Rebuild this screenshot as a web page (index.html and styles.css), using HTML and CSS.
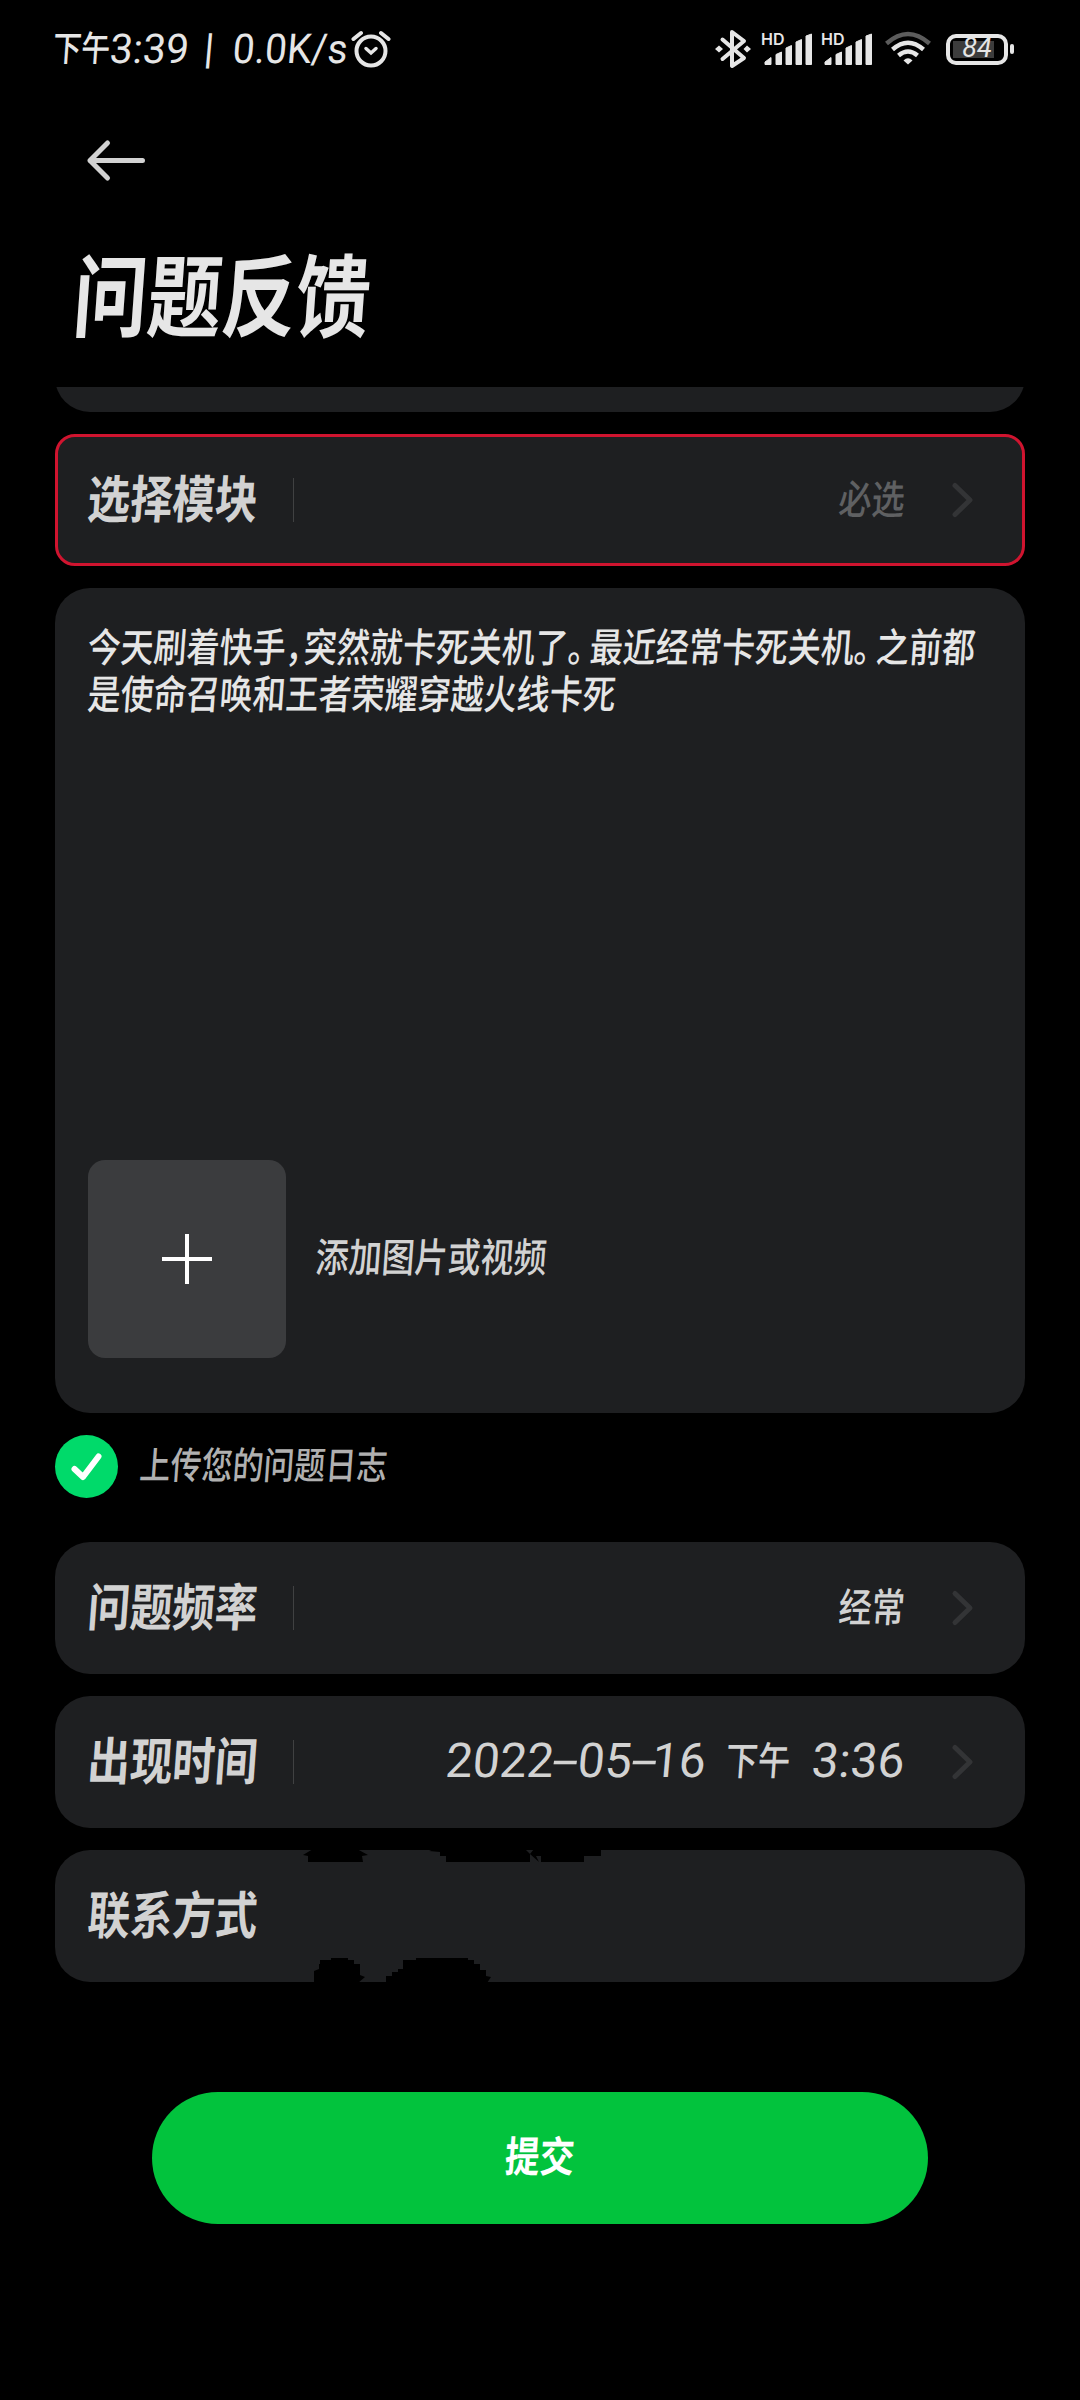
FILE: index.html
```html
<!DOCTYPE html>
<html lang="zh-CN">
<head>
<meta charset="utf-8">
<title>问题反馈</title>
<link rel="stylesheet" href="styles.css">
</head>
<body>
<div class="statusbar">
  <div class="status-left">
    <span class="cell cell-ampm"><span class="t">下午</span></span>
    <span class="cell cell-clock"><span class="n">3:39</span></span>
    <span class="cell cell-bar"><span class="n">|</span></span>
    <span class="cell cell-speed"><span class="n">0.0K/s</span></span>
    <svg class="alarm" width="40" height="38" viewBox="0 0 40 38" fill="none" stroke="#e6e6e6" stroke-linecap="round">
      <circle cx="20" cy="21" r="14.5" stroke-width="4"/>
      <path d="M2.5 9 10 3M37.500 9 30 3" stroke-width="4"/>
      <path d="M15 18.500 20 23 25 18.500" stroke-width="3.500"/>
    </svg>
  </div>
  <div class="status-right">
    <svg width="36" height="40" viewBox="0 0 36 40" fill="none" stroke="#e6e6e6" stroke-width="4" stroke-linecap="round" stroke-linejoin="round">
      <path d="M7.500 10.500 29 29 17 37V3L29 12 7.500 30"/>
      <path d="M0 20 4 16.500 8 20 4 23.500ZM28.500 20 32 16.500 36 20 32 23.500Z" fill="#e6e6e6" stroke="none"/>
    </svg>
    <div class="signal">
      <span class="hd">HD</span>
      <svg width="50" height="34" viewBox="0 0 50 34" fill="#e6e6e6"><path d="M2 30 8 25.500V32.500H2ZM13 22.500 18.500 20V32.500H13ZM23 16 28.500 13.500V32.500H23ZM33 10 38.500 7.500V32.500H33ZM43 4 48.500 2V32.500H43Z" stroke="#e6e6e6" stroke-linejoin="round"/></svg>
    </div>
    <div class="signal">
      <span class="hd">HD</span>
      <svg width="50" height="34" viewBox="0 0 50 34" fill="#e6e6e6"><path d="M2 30 8 25.500V32.500H2ZM13 22.500 18.500 20V32.500H13ZM23 16 28.500 13.500V32.500H23ZM33 10 38.500 7.500V32.500H33ZM43 4 48.500 2V32.500H43Z" stroke="#e6e6e6" stroke-linejoin="round"/></svg>
    </div>
    <svg class="wifi" width="46" height="36" viewBox="0 0 46 36" fill="none" stroke="#e6e6e6" stroke-width="4.500">
      <path d="M1.500 12.500Q23-6.500 44.500 12.500" stroke="#5c5c5c"/>
      <path d="M7.500 18.500Q23 5 38.500 18.500"/>
      <path d="M13.500 24.500Q23 16.500 32.500 24.500"/>
      <path d="M18.500 29.500Q23 25 27.500 29.500L23 33.500Z" fill="#e6e6e6" stroke="none"/>
    </svg>
    <div class="battery"><span class="level">84</span></div>
  </div>
</div>

<header class="header">
  <svg class="back" width="60" height="44" viewBox="0 0 60 44" fill="none" stroke="#d2d2d2" stroke-width="5" stroke-linecap="round" stroke-linejoin="round"><path d="M21.500 5 4 22.500 21.500 40M4 22.500H56.500"/></svg>
  <h1 class="title"><span class="t">问题反馈</span></h1>
</header>

<main class="form">
  <div class="clip"><div class="card card-clipped"></div></div>
  <div class="card row row-error">
    <span class="label"><span class="t">选择模块</span></span><i class="divider"></i>
    <span class="value muted"><span class="t">必选</span></span>
    <svg class="chevron" width="26" height="40" viewBox="0 0 26 40"><path d="M4 5.500 19 20 4 34.500"/></svg>
  </div>
  <section class="card report">
    <div class="report-text">
      <p class="t">今天刷着快手<span class="comma">，</span>突然就卡死关机了<span class="stop">。</span>最近经常卡死关机<span class="stop">。</span>之前都</p>
      <p class="t">是使命召唤和王者荣耀穿越火线卡死</p>
    </div>
    <div class="upload">
      <div class="tile"><svg width="50" height="50" viewBox="0 0 50 50" stroke="#fff" stroke-width="4"><path d="M25 0V50M0 25H50"/></svg></div>
      <span class="upload-text"><span class="t">添加图片或视频</span></span>
    </div>
  </section>
  <div class="log">
    <div class="check"><svg width="63" height="63" viewBox="0 0 63 63" fill="none" stroke="#fff" stroke-width="6" stroke-linecap="round" stroke-linejoin="round"><path d="M19.500 34 28 42 43.500 21.500"/></svg></div>
    <span class="t">上传您的问题日志</span>
  </div>
  <div class="card row">
    <span class="label"><span class="t">问题频率</span></span><i class="divider"></i>
    <span class="value"><span class="t">经常</span></span>
    <svg class="chevron" width="26" height="40" viewBox="0 0 26 40"><path d="M4 5.500 19 20 4 34.500"/></svg>
  </div>
  <div class="card row">
    <span class="label"><span class="t">出现时间</span></span><i class="divider"></i>
    <span class="value date"><span class="n">2022</span><span class="n dash">-</span><span class="n">05</span><span class="n dash">-</span><span class="n sixteen">16</span><span class="ampm"><span class="t">下午</span></span><span class="n">3:36</span></span>
    <svg class="chevron" width="26" height="40" viewBox="0 0 26 40"><path d="M4 5.500 19 20 4 34.500"/></svg>
  </div>
  <div class="card row contact">
    <span class="label"><span class="t">联系方式</span></span>
    <svg class="smudge" width="970" height="132" viewBox="0 0 970 132"><path d="M248 5 258-1H302L313 5 307 6 308 12H253V6ZM374 1 379-1H470L475 4V12H391V6H385V2ZM479-1H546V6H529V12H486V6H481L484 12 475 4ZM259 133V121L264 119V114H265V110H276V108H293V110H299V114H305V125L310 127 303 133ZM331 133V126H337V122H343V119H348V110H361V108H413V110H419V114H425V120H431V126L436 127 432 133Z"/></svg>
  </div>
</main>
<button class="submit"><span class="t">提交</span></button>
</body>
</html>
```
FILE: styles.css
```css
* { box-sizing: border-box; }
body {
  margin: 0;
  width: 1080px;
  height: 2400px;
  background: #000;
  color: #e6e6e6;
  font-family: "Noto Sans CJK SC", sans-serif;
  font-weight: 500;
  overflow: hidden;
}
svg { display: block; flex: none; }

/* condensed, slightly slanted lettering */
.t {
  display: inline-block;
  white-space: nowrap;
  transform: scaleX(.825) skewX(-5deg);
  transform-origin: left center;
}
.n {
  display: inline-block;
  white-space: nowrap;
  font-family: Roboto, sans-serif;
  font-weight: 400;
  transform: skewX(-5deg);
}

.statusbar {
  height: 98px;
  padding: 0 66px 0 53px;
  display: flex;
  justify-content: space-between;
  align-items: center;
}
.status-left, .status-right { display: flex; align-items: center; }
.cell { flex: none; line-height: 48px; font-size: 41px; margin-top: -4px; }
.cell .n { transform-origin: left center; }
.cell-ampm { width: 57px; font-size: 35px; margin-top: -6px; }
.cell-ampm .t { transform: scaleX(.82) skewX(-5deg); }
.cell-clock { width: 94px; }
.cell-bar { width: 29px; font-size: 42px; }
.cell-speed { width: 118px; }
.cell-speed .n { transform: scaleX(.95) skewX(-5deg); }
.status-right { gap: 10px; }
.signal { position: relative; width: 50px; height: 34px; }
.signal:nth-child(2) { margin-left: 2px; }
.hd {
  position: absolute;
  left: -2px;
  top: -1px;
  font: 600 16px/16px Inter, sans-serif;
}
.wifi { margin-left: 2px; }
.battery {
  position: relative;
  width: 62px;
  height: 31px;
  margin: 0 6px 0 5px;
  border: 4px solid #e6e6e6;
  border-radius: 10px;
  background: linear-gradient(#3c3c3c, #3c3c3c) 3px 3px / 41px 17px no-repeat;
  display: flex;
  justify-content: center;
  align-items: center;
}
.battery::after {
  content: "";
  position: absolute;
  right: -10px;
  top: 6px;
  width: 4px;
  height: 10px;
  border-radius: 2px;
  background: #e6e6e6;
}
.level { font: italic 400 27px/24px Roboto, sans-serif; margin-top: -2px; }

.header { height: 289px; padding: 40px 0 0 74px; }
.back { margin-left: 12px; }
.title {
  margin: 44px 0 0;
  font-size: 90px;
  line-height: 130px;
  font-weight: 700;
}

.form { padding: 0 55px; }
.card { position: relative; background: #1e1f21; border-radius: 35px; margin-bottom: 22px; }
.clip { height: 25px; margin-bottom: 22px; overflow: hidden; display: flex; align-items: flex-end; }
.card-clipped { width: 100%; height: 132px; margin: 0; flex: none; }
.row { height: 132px; padding: 0 48px 0 33px; display: flex; align-items: center; }
.row-error { border: 3px solid #d0142f; border-radius: 20px; padding: 0 45px 0 30px; }
.label { width: 205px; font-size: 51px; line-height: 76px; color: #d2d2d2; font-weight: 700; margin-top: -8px; }
.label .t { transform: scaleX(.833) skewX(-5deg); }
.divider { width: 1px; height: 44px; background: #404142; }
.value { margin: -6px 0 0 auto; font-size: 40px; line-height: 60px; color: #d2d2d2; }
.value .t { transform-origin: right center; }
.muted { color: #5f6062; }
.chevron { margin-left: 46px; fill: none; stroke: #333436; stroke-width: 5; stroke-linecap: round; stroke-linejoin: round; }
.date { display: flex; font-size: 48px; margin-top: -2px; }
.date .dash { width: 25px; text-align: center; transform: scaleX(2) skewX(-5deg); }
.date .sixteen { width: 61px; text-align: right; margin-left: -12px; }
.date .ampm { width: 86px; font-size: 39px; margin: -3px 0 0 20px; }
.date .ampm .t { transform-origin: left center; }

.report { height: 825px; padding: 33px; display: flex; flex-direction: column; justify-content: space-between; }
.report-text { font-size: 40px; line-height: 47px; padding-top: 1px; }
.report-text p { display: block; margin: 0; }
.comma { margin-right: -.45em; }
.stop { margin-right: -.33em; }
.upload { display: flex; align-items: center; padding-bottom: 22px; }
.tile { width: 198px; height: 198px; border-radius: 17px; background: #3b3c3e; display: flex; align-items: center; justify-content: center; }
.upload-text { margin: -8px 0 0 30px; font-size: 40px; color: #d2d2d2; }

.log { height: 63px; margin-bottom: 44px; display: flex; align-items: center; gap: 22px; font-size: 37.5px; line-height: 56px; color: #b0b0b0; }
.log .t { margin-top: -8px; }
.check { width: 63px; height: 63px; border-radius: 50%; background: #00da6a; }

.contact { margin-bottom: 0; }
.smudge { position: absolute; left: 0; top: 0; fill: #000; }

.submit {
  display: flex;
  justify-content: center;
  align-items: center;
  width: 776px;
  height: 132px;
  margin: 110px auto 0;
  padding: 0 0 8px;
  border: 0;
  border-radius: 66px;
  background: #02c33d;
  color: #fff;
  font: 700 42px/62px "Noto Sans CJK SC", sans-serif;
}
.submit .t { transform-origin: center; }
```
